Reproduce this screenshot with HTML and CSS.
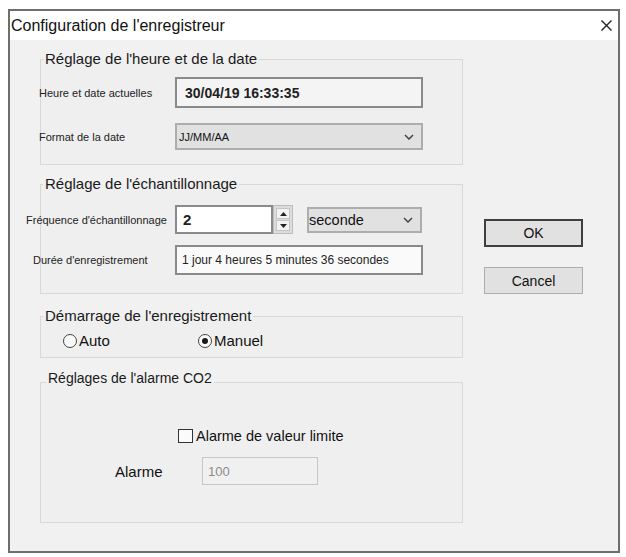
FILE: index.html
```html
<!DOCTYPE html>
<html lang="fr">
<head>
<meta charset="utf-8">
<title>Configuration de l'enregistreur</title>
<link rel="stylesheet" href="styles.css">
</head>
<body>
<div class="dialog">
  <div class="titlebar">
    <span class="title">Configuration de l'enregistreur</span>
    <svg class="close" width="11" height="11" viewBox="0 0 11 11"><path d="M0.5 0.5 L10.5 10.5 M10.5 0.5 L0.5 10.5" stroke="#222" stroke-width="1.4" fill="none"/></svg>
  </div>
  <div class="content">
    <div class="groups">
      <fieldset class="group g1">
        <legend>Réglage de l'heure et de la date</legend>
        <div class="gbody">
          <div class="row">
            <span class="lbl off2">Heure et date actuelles</span>
            <div class="field datebox">30/04/19 16:33:35</div>
          </div>
          <div class="row">
            <span class="lbl off2">Format de la date</span>
            <div class="combo wide"><span class="ctext small">JJ/MM/AA</span><svg class="chev" width="10" height="6" viewBox="0 0 10 6"><polyline points="1,1 5,5 9,1" fill="none" stroke="#444" stroke-width="1.5"/></svg></div>
          </div>
        </div>
      </fieldset>

      <fieldset class="group g2">
        <legend>Réglage de l'échantillonnage</legend>
        <div class="gbody">
          <div class="row">
            <span class="lbl off15">Fréquence d'échantillonnage</span>
            <div class="spinrow">
              <div class="field spin-input">2</div>
              <div class="spin">
                <div class="spin-btn"><svg width="7" height="4" viewBox="0 0 7 4"><polygon points="0,4 3.5,0 7,4" fill="#222"/></svg></div>
                <div class="spin-btn"><svg width="7" height="4" viewBox="0 0 7 4"><polygon points="0,0 3.5,4 7,0" fill="#222"/></svg></div>
              </div>
              <div class="combo unit"><span class="ctext">seconde</span><svg class="chev" width="10" height="6" viewBox="0 0 10 6"><polyline points="1,1 5,5 9,1" fill="none" stroke="#444" stroke-width="1.5"/></svg></div>
            </div>
          </div>
          <div class="row">
            <span class="lbl off8">Durée d'enregistrement</span>
            <div class="field duration">1 jour 4 heures 5 minutes 36 secondes</div>
          </div>
        </div>
      </fieldset>

      <fieldset class="group g3">
        <legend>Démarrage de l'enregistrement</legend>
        <div class="gbody radios">
          <label class="radio auto"><span class="circle"></span>Auto</label>
          <label class="radio"><span class="circle checked"></span>Manuel</label>
        </div>
      </fieldset>

      <fieldset class="group g4">
        <legend>Réglages de l'alarme CO2</legend>
        <div class="gbody">
          <label class="check"><span class="box"></span>Alarme de valeur limite</label>
          <div class="alarm-row">
            <span class="alarm-lbl">Alarme</span>
            <div class="field disabled">100</div>
          </div>
        </div>
      </fieldset>
    </div>

    <div class="buttons">
      <button class="btn default">OK</button>
      <button class="btn">Cancel</button>
    </div>
  </div>
</div>
</body>
</html>
```

FILE: styles.css
```css
* { box-sizing: border-box; }

html, body {
  margin: 0;
  background: #ffffff;
  font-family: "Liberation Sans", Arial, sans-serif;
  color: #111;
}

.dialog {
  margin: 9px 0 0 8px;
  width: 612px;
  height: 544px;
  border: 2px solid #6e6e6e;
  background: #f1f1f1;
}

.titlebar {
  height: 29px;
  background: #ffffff;
  display: flex;
  align-items: center;
  justify-content: space-between;
  padding: 0 6px 0 1px;
}

.title {
  font-size: 16px;
  line-height: 18px;
  color: #111;
}

.close { display: block; }

.content {
  display: flex;
  align-items: flex-start;
  gap: 21px;
  padding-left: 30px;
}

.groups {
  width: 423px;
  display: flex;
  flex-direction: column;
}

.group {
  margin: 0;
  padding: 0;
  min-width: 0;
  width: 423px;
  border: 1px solid #d8d8d8;
  background: #efefef;
}

.group legend {
  margin-left: 2px;
  padding: 0 2px;
  font-size: 15px;
  line-height: 18px;
  color: #1a1a1a;
}

.g1 { margin-top: 10px; }
.g1 .gbody { padding: 9px 0 14px; display: flex; flex-direction: column; gap: 15px; }

.g2 { margin-top: 10px; }
.g2 .gbody { padding: 12px 0 18px; display: flex; flex-direction: column; gap: 11px; }

.g3 { margin-top: 13px; }

.g4 { margin-top: 12px; }
.g4 legend {
  margin-left: 5px;
  font-size: 14px;
  line-height: 16px;
  padding-bottom: 8px;
}
.g4 .gbody { padding: 33px 0 37px; display: flex; flex-direction: column; gap: 12px; }

.row {
  display: grid;
  grid-template-columns: 134px auto;
  align-items: center;
}

.lbl {
  font-size: 11px;
  white-space: nowrap;
  color: #222;
}
.off2 { margin-left: -2px; }
.off8 { margin-left: -8px; }
.off15 { margin-left: -15px; }

.field {
  display: flex;
  align-items: center;
  border: 2px solid #8a8a8a;
  white-space: nowrap;
}

.datebox {
  width: 248px;
  height: 31px;
  background: #f4f4f4;
  font-weight: bold;
  font-size: 14px;
  padding-left: 8px;
  color: #222;
}

.combo {
  display: flex;
  align-items: center;
  justify-content: space-between;
  border: 2px solid #adadad;
  background: #e1e1e1;
  padding: 0 7px 0 2px;
}
.combo.wide { width: 248px; height: 27px; }
.combo.unit { width: 115px; height: 26px; padding-left: 0; }

.ctext { font-size: 14.5px; color: #111; }
.ctext.small { font-size: 11px; }
.chev { display: block; }

.spinrow {
  display: flex;
  align-items: center;
}

.spin-input {
  width: 98px;
  height: 29px;
  background: #ffffff;
  font-weight: bold;
  font-size: 15px;
  padding-left: 6px;
  color: #222;
}

.spin {
  width: 20px;
  height: 29px;
  display: flex;
  flex-direction: column;
  gap: 1px;
  padding: 2px;
  background: #dcdcdc;
  border: 1px solid #bdbdbd;
  margin-right: 14px;
}

.spin-btn {
  flex: 1;
  display: flex;
  align-items: center;
  justify-content: center;
  background: #f3f3f3;
  border: 1px solid #c4c4c4;
}
.spin-btn svg { display: block; }

.duration {
  width: 248px;
  height: 30px;
  background: #fafafa;
  font-size: 12px;
  padding-left: 5px;
  color: #222;
}

.radios {
  padding: 7px 0 7px 22px;
  display: flex;
  align-items: center;
  height: 32px;
}

.radio {
  display: flex;
  align-items: center;
  gap: 1px;
  font-size: 15px;
  line-height: 18px;
  color: #111;
}
.radio.auto { width: 135px; }

.circle {
  width: 14px;
  height: 14px;
  border-radius: 50%;
  border: 1px solid #444;
  background: #fbfbfb;
  display: flex;
  align-items: center;
  justify-content: center;
  margin-right: 1px;
}
.circle.checked::after {
  content: "";
  width: 6px;
  height: 6px;
  border-radius: 50%;
  background: #1a1a1a;
}

.check {
  display: flex;
  align-items: center;
  gap: 3px;
  margin-left: 137px;
  height: 18px;
  font-size: 14.5px;
  color: #111;
}
.box {
  width: 15px;
  height: 14px;
  border: 1px solid #333;
  background: #fbfbfb;
}

.alarm-row {
  display: grid;
  grid-template-columns: 87px auto;
  align-items: center;
  padding-left: 74px;
}
.alarm-lbl { font-size: 15px; color: #111; }

.disabled {
  width: 116px;
  height: 28px;
  border: 1px solid #c6c6c6;
  background: #f0f0f0;
  color: #8c8c8c;
  font-size: 13px;
  padding-left: 5px;
}

.buttons {
  margin-top: 179px;
  display: flex;
  flex-direction: column;
  gap: 20px;
}

.btn {
  width: 99px;
  height: 27px;
  font-family: "Liberation Sans", Arial, sans-serif;
  font-size: 14px;
  color: #111;
  background: #e1e1e1;
  border: 1px solid #adadad;
  padding: 0;
}
.btn.default {
  height: 28px;
  border: 2px solid #3f3f3f;
}
```
